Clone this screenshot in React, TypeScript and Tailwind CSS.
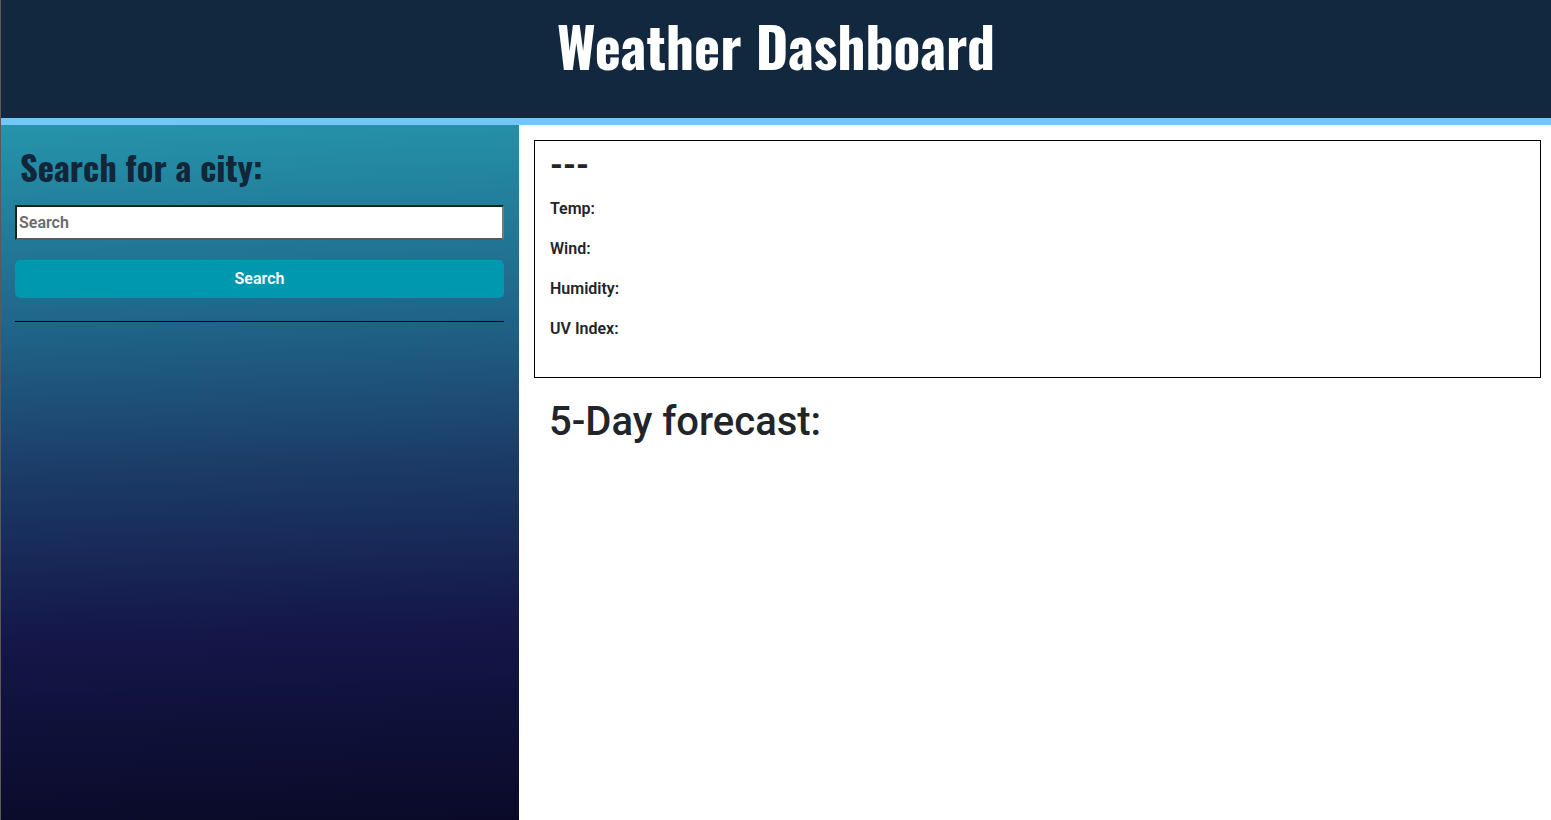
import { useState } from 'react'

const condensed = { fontFamily: '"Oswald", "Liberation Sans", Arial, sans-serif' }

export default function App() {
  const [city, setCity] = useState('')

  return (
    <div className="h-screen flex flex-col bg-white border-l border-[#5a5a5a] font-['Roboto',_'Liberation_Sans',_sans-serif] text-[#212529]">
      {/* Header */}
      <header className="h-[118px] bg-[#12283f] flex justify-center pt-[18px] shrink-0">
        <h1 style={condensed} className="text-white font-bold text-[55.5px] leading-none">
          Weather Dashboard
        </h1>
      </header>
      <div className="h-[7px] bg-[#73c6f7] shrink-0"></div>

      <div className="flex flex-1 min-h-0">
        {/* Sidebar */}
        <aside className="w-[518px] shrink-0 px-[14px] pt-[18px] bg-[linear-gradient(178deg,#2594aa_0%,#20668a_28%,#1b3a66_50%,#141749_72%,#0a0a28_100%)]">
          <h2 style={condensed} className="text-[#12263a] font-bold text-[34.5px] leading-[48px] ml-[5px]">
            Search for a city:
          </h2>
          <input
            value={city}
            onChange={(e) => setCity(e.target.value)}
            placeholder="Search"
            className="mt-[14px] block w-[489px] h-[35px] bg-white px-[2px] text-[16px] font-semibold text-[#333] placeholder:text-[#6b6b6b] border-2 border-t-[#1c1c1c] border-l-[#1c1c1c] border-r-[#777] border-b-[#5a5a5a] outline-none"
          />
          <button className="mt-[20px] w-[489px] h-[38px] rounded-[5px] bg-[#0098af] text-white text-[16px] font-semibold">
            Search
          </button>
          <hr className="mt-[23px] w-[489px] border-0 border-t border-black" />
        </aside>

        {/* Main */}
        <main className="flex-1 pl-[15px] pr-[10px] pt-[15px]">
          <section className="border border-black pl-[15px] pt-[5px] pb-[20px]">
            <h2 className="text-[33px] font-bold leading-[38px] mb-[13px]">---</h2>
            <p className="text-[16px] font-semibold leading-[24px] mb-[16px]">Temp:</p>
            <p className="text-[16px] font-semibold leading-[24px] mb-[16px]">Wind:</p>
            <p className="text-[16px] font-semibold leading-[24px] mb-[16px]">Humidity:</p>
            <p className="text-[16px] font-semibold leading-[24px] mb-[16px]">UV Index:</p>
          </section>
          <h2 className="pl-[15px] mt-[20px] text-[40px] font-medium leading-[48px]">5-Day forecast:</h2>
        </main>
      </div>
    </div>
  )
}
